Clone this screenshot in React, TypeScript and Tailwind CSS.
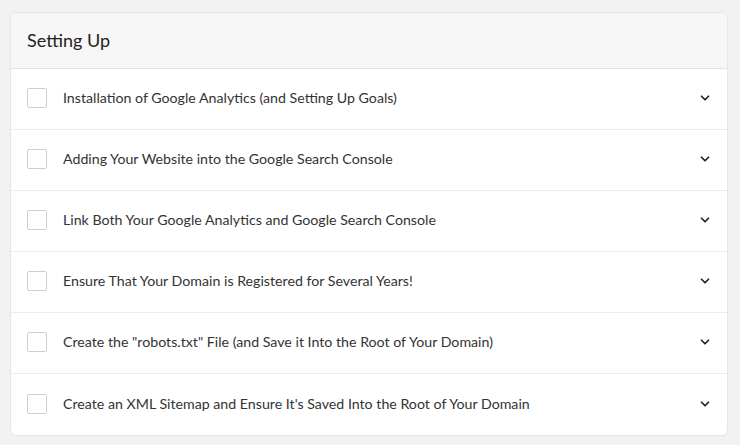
import { ChevronDown } from "lucide-react";

const tasks = [
  "Installation of Google Analytics (and Setting Up Goals)",
  "Adding Your Website into the Google Search Console",
  "Link Both Your Google Analytics and Google Search Console",
  "Ensure That Your Domain is Registered for Several Years!",
  'Create the "robots.txt" File (and Save it Into the Root of Your Domain)',
  "Create an XML Sitemap and Ensure It's Saved Into the Root of Your Domain",
];

export default function App() {
  return (
    <div
      className="min-h-[445px] bg-[#f2f2f2] pl-[10px] pr-[12px] pt-[12px] pb-[11px]"
      style={{ fontFamily: "Lato, 'Noto Sans', sans-serif" }}
    >
      <div className="overflow-hidden rounded-md border border-[#e6e6e6] bg-white">
        <div className="flex h-[56px] items-center border-b border-[#e4e4e4] bg-[#f7f7f7] px-4">
          <h2 className="text-[18px] text-[#222]">Setting Up</h2>
        </div>
        {tasks.map((task, i) => (
          <div
            key={task}
            className={
              "flex h-[61px] items-center pb-[2px] pl-4 pr-[15px] " +
              (i < tasks.length - 1 ? "border-b border-[#ececec]" : "")
            }
          >
            <span className="h-5 w-5 shrink-0 rounded-[2px] border border-[#cfcfcf] bg-white" />
            <span className="ml-4 flex-1 text-[14.2px] text-[#333]">{task}</span>
            <ChevronDown className="h-[14px] w-[14px] text-[#222]" strokeWidth={3} />
          </div>
        ))}
      </div>
    </div>
  );
}
